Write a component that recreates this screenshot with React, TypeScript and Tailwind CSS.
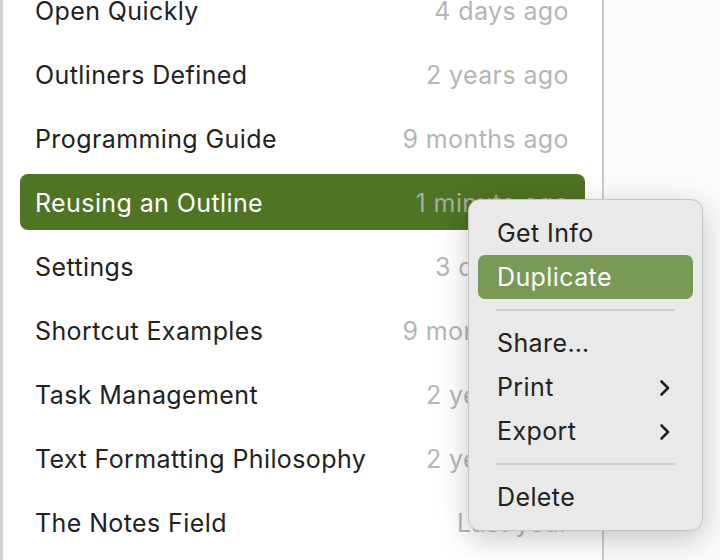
import React from "react";

const rows: [string, string][] = [
  ["Open Quickly", "4 days ago"],
  ["Outliners Defined", "2 years ago"],
  ["Programming Guide", "9 months ago"],
  ["Reusing an Outline", "1 minute ago"],
  ["Settings", "3 days ago"],
  ["Shortcut Examples", "9 months ago"],
  ["Task Management", "2 years ago"],
  ["Text Formatting Philosophy", "2 years ago"],
  ["The Notes Field", "Last year"],
];

function Chevron() {
  return (
    <svg width="12" height="18" viewBox="0 0 12 18" fill="none">
      <path d="M2.5 2.5 L9 9 L2.5 15.5" stroke="#222" strokeWidth="2.6" strokeLinecap="round" strokeLinejoin="round" />
    </svg>
  );
}

function Item({ label, active, sub }: { label: string; active?: boolean; sub?: boolean }) {
  return (
    <div
      className={`flex h-[44px] items-center justify-between rounded-[7px] pl-[19px] pr-[22px] pt-[2px] text-[25px] tracking-[0.4px] ${
        active ? "bg-[#789a56] text-white" : "text-[#222222]"
      }`}
    >
      <span>{label}</span>
      {sub && <Chevron />}
    </div>
  );
}

function Sep() {
  return <div className="mx-[18px] my-[10px] h-[2px] bg-[#cfcfcf]" />;
}

export default function App() {
  return (
    <div className="relative h-[560px] w-[720px] overflow-hidden bg-white" style={{ fontFamily: "Inter, sans-serif" }}>
      <div className="flex h-full">
        <div className="h-full w-[3px] bg-[#d2d2d2]" />
        <div className="h-full w-[599px] bg-white">
          <div className="mt-[-22px] flex flex-col">
            {rows.map(([name, date], i) => {
              const sel = i === 3;
              return (
                <div key={name} className="h-[64px] px-[17px] py-[4px]">
                  <div
                    className={`flex h-[56px] items-center justify-between rounded-[8px] pl-[15px] pr-[16px] pt-[3px] text-[25px] tracking-[0.4px] ${
                      sel ? "bg-[#4e7424] text-white" : "text-[#222222]"
                    }`}
                  >
                    <span>{name}</span>
                    <span className={sel ? "text-[#a8aca2]" : "text-[#b5b5b5]"}>{date}</span>
                  </div>
                </div>
              );
            })}
          </div>
        </div>
        <div className="h-full w-[2px] bg-[#cccccc]" />
        <div className="h-full flex-1 bg-[#fbfbfb]" />
      </div>

      <div className="absolute left-[468px] top-[199px] w-[235px] rounded-[12px] border border-[#c4c4c4] bg-[#e9e9e9] px-[9px] py-[11px] shadow-[0_8px_30px_rgba(0,0,0,0.22)]">
        <Item label="Get Info" />
        <Item label="Duplicate" active />
        <Sep />
        <Item label="Share…" />
        <Item label="Print" sub />
        <Item label="Export" sub />
        <Sep />
        <Item label="Delete" />
      </div>
    </div>
  );
}
